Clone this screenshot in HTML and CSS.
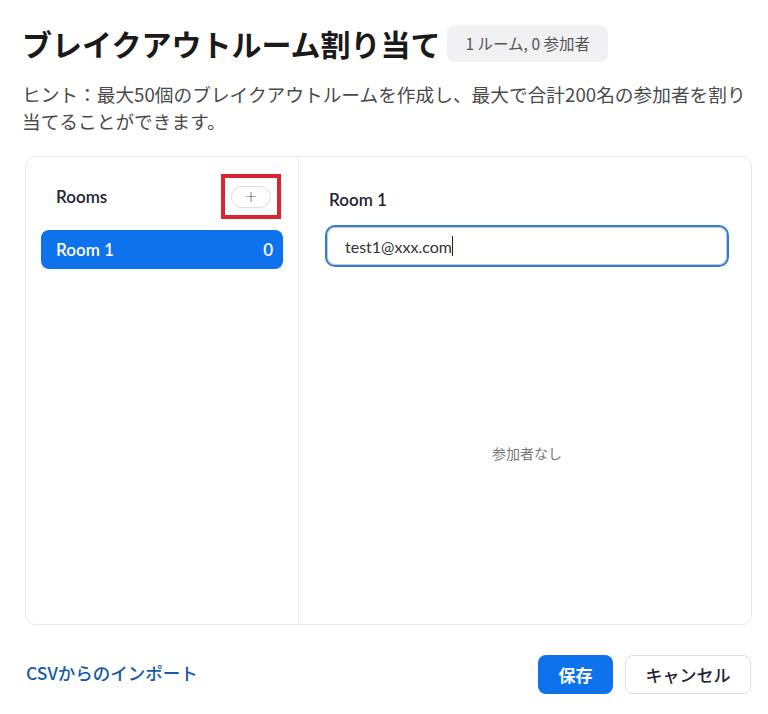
FILE: index.html
```html
<!DOCTYPE html>
<html lang="ja">
<head>
<meta charset="utf-8">
<link rel="stylesheet" href="styles.css">
</head>
<body>
<div class="dialog">
  <div class="header">
    <h1 class="title">ブレイクアウトルーム割り当て</h1>
    <span class="badge">1 ルーム, 0 参加者</span>
  </div>
  <p class="hint">ヒント：最大50個のブレイクアウトルームを作成し、最大で合計200名の参加者を割り当てることができます。</p>
  <div class="panel">
    <div class="rooms">
      <div class="rooms-head">
        <span class="rooms-label">Rooms</span>
        <span class="add-wrap"><span class="add-btn">+</span></span>
      </div>
      <div class="room-item"><span>Room 1</span><span>0</span></div>
    </div>
    <div class="detail">
      <div class="detail-title">Room 1</div>
      <div class="input"><span class="input-text">test1@xxx.com</span><span class="caret"></span></div>
      <div class="empty">参加者なし</div>
    </div>
  </div>
  <div class="footer">
    <a class="import">CSVからのインポート</a>
    <div class="actions">
      <button class="btn primary">保存</button>
      <button class="btn secondary">キャンセル</button>
    </div>
  </div>
</div>
</body>
</html>
```
FILE: styles.css
```css
* { box-sizing: border-box; }
html, body { margin: 0; padding: 0; background: #fff; }
body {
  font-family: Lato, "Noto Sans CJK JP", sans-serif;
  color: #232333;
  width: 768px;
  height: 714px;
  overflow: hidden;
}
.dialog { padding: 20px 17px 0 22px; }
.header { display: flex; align-items: center; height: 40px; margin-top: 3px; }
.title {
  margin: 0;
  font-family: "Noto Sans CJK JP", sans-serif;
  font-size: 30px;
  font-weight: 700;
  color: #1a1a1a;
  line-height: 40px;
}
.badge {
  margin-left: 6px;
  background: #f1f1f4;
  border-radius: 8px;
  height: 37px;
  padding: 0 18px 0 19px;
  display: flex;
  align-items: center;
  font-family: "Noto Sans CJK JP", sans-serif;
  font-size: 15.5px;
  color: #555;
}
.hint {
  margin: 17px 0 0 0;
  font-family: "Noto Sans CJK JP", sans-serif;
  font-size: 18.7px;
  line-height: 27px;
  color: #4a4a4a;
  width: 728px;
}
.panel {
  margin: 22px 0 0 3px;
  width: 727px;
  height: 469px;
  border: 1px solid #e9e9ec;
  border-radius: 10px;
  display: flex;
}
.rooms { width: 273px; border-right: 1px solid #ececef; padding: 15px 15px 0 15px; }
.rooms-head { display: flex; align-items: center; justify-content: space-between; height: 47px; padding-left: 15px; margin-top: 1px; }
.rooms-label { font-size: 17px; font-weight: 600; color: #232333; }
.add-wrap {
  border: 4px solid #d6262f;
  width: 60px;
  height: 45px;
  display: flex;
  align-items: center;
  justify-content: center;
  margin-right: 2px;
}
.add-btn {
  width: 40px;
  height: 22px;
  border: 1px solid #dcdce0;
  border-radius: 11px;
  display: flex;
  align-items: center;
  justify-content: center;
  color: #666;
  font-size: 16px;
  font-family: "DejaVu Sans", sans-serif;
  font-weight: 300;
  line-height: 1;
}
.room-item {
  margin-top: 10px;
  height: 39px;
  background: #0e72ed;
  border-radius: 8px;
  color: #fff;
  font-size: 17px;
  font-weight: 600;
  display: flex;
  align-items: center;
  justify-content: space-between;
  padding: 0 10px 0 15px;
}
.detail { flex: 1; padding: 30px 22px 0 26px; display: flex; flex-direction: column; }
.detail-title { font-size: 17px; font-weight: 600; color: #232333; padding-left: 4px; line-height: 26px; }
.input {
  margin-top: 12px;
  height: 42px;
  border: 2px solid #2d7fd6;
  border-radius: 10px;
  box-shadow: inset 0 0 0 1px #c8c8cc;
  display: flex;
  align-items: center;
  padding-left: 18px;
  font-size: 16px;
  color: #333;
}
.caret { display: inline-block; width: 1px; height: 20px; background: #222; }
.empty {
  flex: 1;
  display: flex;
  align-items: center;
  justify-content: center;
  font-family: "Noto Sans CJK JP", sans-serif;
  font-size: 14px;
  color: #777;
  padding-top: 14px;
}
.footer { display: flex; align-items: center; justify-content: space-between; margin-top: 30px; padding-left: 4px; }
.import {
  font-family: "Noto Sans CJK JP", sans-serif;
  font-size: 17.5px;
  font-weight: 500;
  color: #1559a8;
  margin-top: -4px;
}
.actions { display: flex; gap: 12px; }
.btn {
  height: 39px;
  border-radius: 8px;
  font-family: "Noto Sans CJK JP", sans-serif;
  font-size: 17px;
  font-weight: 700;
  cursor: pointer;
}
.primary { width: 75px; background: #0e72ed; color: #fff; border: none; }
.secondary { width: 126px; background: #fff; color: #232333; border: 1px solid #dfdfe3; font-weight: 500; }
```
